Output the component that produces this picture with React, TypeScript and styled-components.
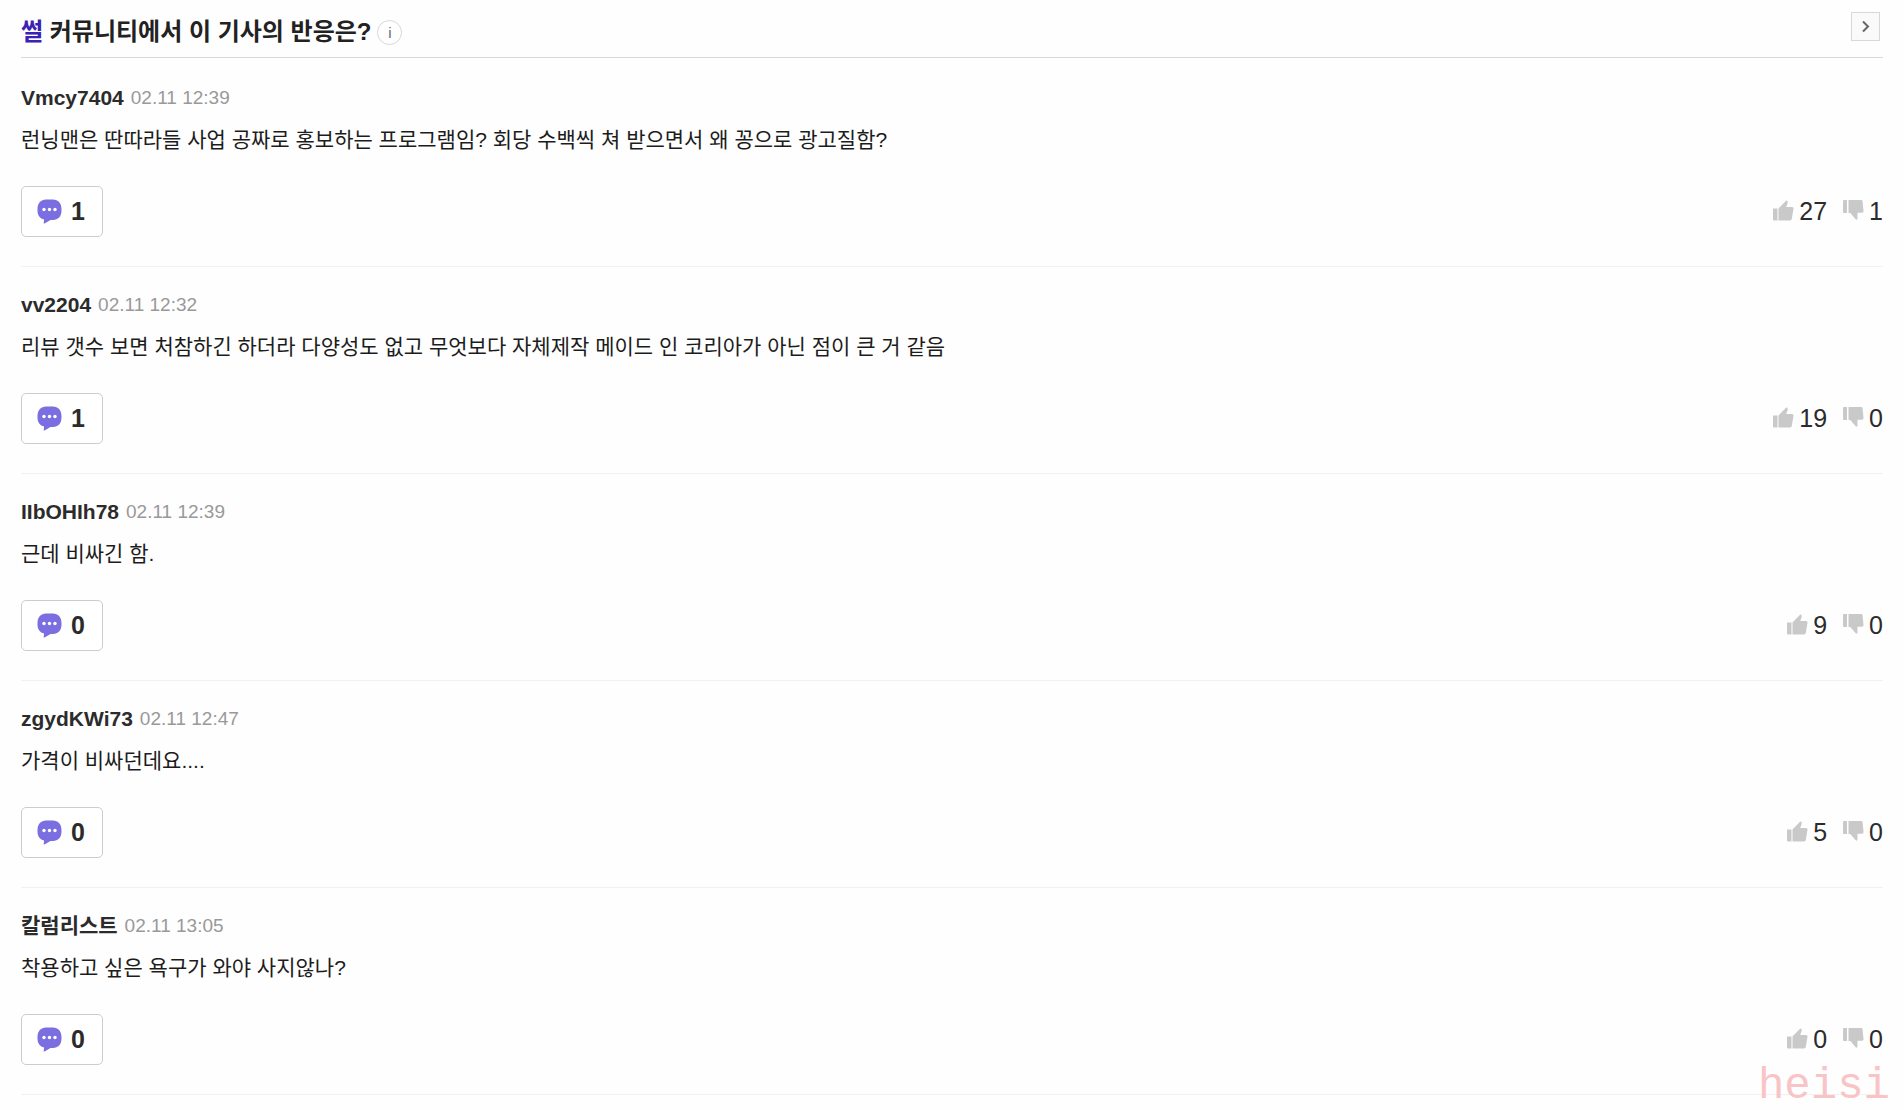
import React from "react";
import styled, { createGlobalStyle } from "styled-components";

const GlobalStyle = createGlobalStyle`
  * { box-sizing: border-box; }
  body {
    margin: 0;
    background: #fefefe;
    color: #222;
    font-family: "Liberation Sans", "Noto Sans CJK KR", sans-serif;
  }
`;

const Page = styled.main`
  position: relative;
  padding: 0 21px 15px;
`;

const Header = styled.header`
  display: flex;
  align-items: flex-start;
  justify-content: space-between;
  height: 58px;
  padding: 12px 3px 0 0;
  border-bottom: 1px solid #d8d8d8;
`;

const TitleGroup = styled.div`
  display: flex;
  align-items: center;
  gap: 6px;
`;

const Title = styled.h1`
  margin: 0;
  font-size: 24px;
  line-height: 40px;
  font-weight: 700;
`;

const Accent = styled.span`
  color: #3a22b4;
`;

const InfoButton = styled.button`
  display: grid;
  place-items: center;
  width: 25px;
  height: 25px;
  padding: 0;
  border: 1px solid #d9d9d9;
  border-radius: 50%;
  background: #fff;
  color: #666;
  font: 15px "Liberation Sans", sans-serif;
`;

const MoreLink = styled.a`
  display: grid;
  place-items: center;
  width: 29px;
  height: 29px;
  border: 1px solid #d8d8d8;
  background: #fafafa;
  color: #666;
`;

const List = styled.ul`
  margin: 0;
  padding: 2px 0 0;
  list-style: none;
`;

const Item = styled.li`
  padding: 26px 0 29px;
  border-bottom: 1px solid #f1f1f1;
`;

const Meta = styled.div`
  display: flex;
  align-items: center;
  gap: 7px;
  height: 24px;
  line-height: 24px;
`;

const Author = styled.strong`
  font-size: 21px;
  color: #2b2b2b;
`;

const Time = styled.time`
  font-size: 19px;
  color: #999;
`;

const Message = styled.p`
  margin: 14px 0 30px;
  font-size: 21px;
  line-height: 32px;
  color: #1c1c1c;
`;

const Actions = styled.div`
  display: flex;
  align-items: center;
  justify-content: space-between;
`;

const ReplyButton = styled.button`
  display: flex;
  align-items: center;
  gap: 9px;
  width: 82px;
  height: 51px;
  padding: 0 15px;
  border: 1px solid #ccc;
  border-radius: 5px;
  background: #fff;
  color: #2b2b2b;
  font: 700 25px "Liberation Sans", sans-serif;
`;

const Votes = styled.div`
  display: flex;
  gap: 16px;
  padding-bottom: 2px;
`;

const VoteButton = styled.button`
  display: flex;
  align-items: center;
  gap: 5px;
  padding: 0;
  border: 0;
  background: none;
  color: #2b2b2b;
  font: 25px/30px "Liberation Sans", sans-serif;
`;

const Watermark = styled.span`
  position: absolute;
  right: 14px;
  bottom: 2px;
  color: #f9c4c6;
  font: 44px/44px "Liberation Mono", monospace;
  pointer-events: none;
`;

const BubbleIcon = () => (
  <svg width="25" height="25" viewBox="0 0 25 25" aria-hidden="true">
    <path
      d="M9 .5h7c5 0 8.500 3.700 8.500 9.500v1.500c0 6-3.500 9.500-8.500 9.500h-2.500L7.500 24.500c-.5.300-.9 0-.8-.5l.4-3.500C3 19.500.5 16.500.5 11.500V10C.5 4.200 4 .5 9 .5z"
      fill="#7a6ee0"
    />
    <circle cx="7" cy="10.500" r="1.700" fill="#fff" />
    <circle cx="12.500" cy="10.500" r="1.700" fill="#fff" />
    <circle cx="18" cy="10.500" r="1.700" fill="#fff" />
  </svg>
);

const ThumbUp = () => (
  <svg width="21" height="21" viewBox="0 0 21 21" fill="#c9c9c9" aria-hidden="true">
    <path d="M0 8.500h4.500v12H1a1 1 0 0 1-1-1z" />
    <path d="M5.500 8.500L13 .8c.5-.5 1.200-.2 1.500.3.400.8.300 1.500 0 2.400L13.200 7H19c1 0 1.700.8 1.500 1.800l-1.700 10c-.2 1-.8 1.700-1.800 1.700H5.500z" />
  </svg>
);

const ThumbDown = () => (
  <svg width="21" height="21" viewBox="0 0 21 21" fill="#c9c9c9" aria-hidden="true">
    <path d="M0 1a1 1 0 0 1 1-1h3v13H1a1 1 0 0 1-1-1z" />
    <path d="M5.500 0H18c1 0 1.500.6 1.600 1.500L20.500 11c.1 1-.5 1.700-1.500 1.700h-4.500v5.800c0 1-1 1.500-1.800.8L7.300 13H5.500z" />
  </svg>
);

const Chevron = () => (
  <svg width="13" height="13" viewBox="0 0 13 13" fill="none" aria-hidden="true">
    <path d="M4 1.500l5 5-5 5" stroke="currentColor" strokeWidth="2" />
  </svg>
);

type Comment = {
  author: string;
  time: string;
  text: string;
  replies: number;
  likes: number;
  dislikes: number;
};

const comments: Comment[] = [
  { author: "Vmcy7404", time: "02.11 12:39", text: "런닝맨은 딴따라들 사업 공짜로 홍보하는 프로그램임? 회당 수백씩 쳐 받으면서 왜 꽁으로 광고질함?", replies: 1, likes: 27, dislikes: 1 },
  { author: "vv2204", time: "02.11 12:32", text: "리뷰 갯수 보면 처참하긴 하더라 다양성도 없고 무엇보다 자체제작 메이드 인 코리아가 아닌 점이 큰 거 같음", replies: 1, likes: 19, dislikes: 0 },
  { author: "IIbOHIh78", time: "02.11 12:39", text: "근데 비싸긴 함.", replies: 0, likes: 9, dislikes: 0 },
  { author: "zgydKWi73", time: "02.11 12:47", text: "가격이 비싸던데요....", replies: 0, likes: 5, dislikes: 0 },
  { author: "칼럼리스트", time: "02.11 13:05", text: "착용하고 싶은 욕구가 와야 사지않나?", replies: 0, likes: 0, dislikes: 0 },
];

const CommentItem = ({ comment }: { comment: Comment }) => (
  <Item>
    <Meta>
      <Author>{comment.author}</Author>
      <Time>{comment.time}</Time>
    </Meta>
    <Message>{comment.text}</Message>
    <Actions>
      <ReplyButton type="button">
        <BubbleIcon />
        {comment.replies}
      </ReplyButton>
      <Votes>
        <VoteButton type="button">
          <ThumbUp />
          {comment.likes}
        </VoteButton>
        <VoteButton type="button">
          <ThumbDown />
          {comment.dislikes}
        </VoteButton>
      </Votes>
    </Actions>
  </Item>
);

export default function App() {
  return (
    <>
      <GlobalStyle />
      <Page>
        <Header>
          <TitleGroup>
            <Title>
              <Accent>썰</Accent> 커뮤니티에서 이 기사의 반응은?
            </Title>
            <InfoButton type="button">i</InfoButton>
          </TitleGroup>
          <MoreLink href="#" aria-label="더보기">
            <Chevron />
          </MoreLink>
        </Header>
        <List>
          {comments.map((comment) => (
            <CommentItem key={comment.author} comment={comment} />
          ))}
        </List>
        <Watermark>heisi</Watermark>
      </Page>
    </>
  );
}
